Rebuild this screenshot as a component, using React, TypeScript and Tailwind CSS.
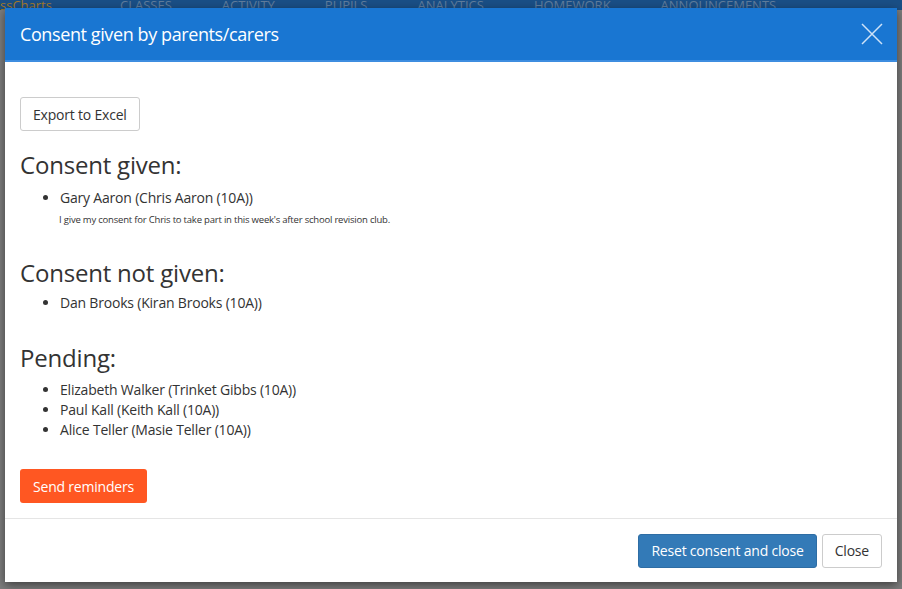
export default function App() {
  const f = { fontFamily: '"Open Sans", "Liberation Sans", sans-serif' };
  return (
    <div style={f} className="relative w-[902px] h-[589px] overflow-hidden bg-[#7d7d7d] text-[#333]">
      <div className="absolute left-0 top-0 w-full h-[10px] bg-[#1a4f86] flex gap-[50px] pl-[65px] text-[13px] text-[#5f7c9c] leading-[10px] items-end">
        <span className="text-[#a37a2b] -ml-[65px] w-[70px]">ssCharts</span>
        <span>CLASSES</span><span>ACTIVITY</span><span>PUPILS</span><span>ANALYTICS</span><span>HOMEWORK</span><span>ANNOUNCEMENTS</span>
      </div>
      <div className="absolute left-[5px] top-[8px] w-[892px] h-[574px] bg-white flex flex-col shadow-[0_3px_9px_rgba(0,0,0,0.5)]">
        <div className="h-[54px] bg-[#1976d2] flex items-center justify-between pl-[15px] pr-[14px] border-b-2 border-[#3d8de0]">
          <span className="text-white text-[18px] tracking-[-0.4px]">Consent given by parents/carers</span>
          <svg width="22" height="22" viewBox="0 0 22 22" stroke="#cfe2f7" strokeWidth="1.5"><path d="M1 1L21 21M21 1L1 21" /></svg>
        </div>
        <div className="flex-1 px-[15px] pt-[35px] tracking-[-0.2px]">
          <button className="h-[34px] px-[12px] border border-[#ccc] rounded-[3px] text-[14px] text-[#333]">Export to Excel</button>
          <h2 className="text-[24px] mt-[18px] leading-[32px]">Consent given:</h2>
          <ul className="list-disc pl-[40px] text-[14px] leading-[20px] mt-[7px]">
            <li>Gary Aaron (Chris Aaron (10A))<div className="text-[9.5px] leading-[16px] -ml-[1px] mt-[4px]">I give my consent for Chris to take part in this week's after school revision club.</div></li>
          </ul>
          <h2 className="text-[24px] mt-[29px] leading-[32px]">Consent not given:</h2>
          <ul className="list-disc pl-[40px] text-[14px] leading-[20px] mt-[4px]"><li>Dan Brooks (Kiran Brooks (10A))</li></ul>
          <h2 className="text-[24px] mt-[29px] leading-[32px]">Pending:</h2>
          <ul className="list-disc pl-[40px] text-[14px] leading-[20px] mt-[6px]">
            <li>Elizabeth Walker (Trinket Gibbs (10A))</li>
            <li>Paul Kall (Keith Kall (10A))</li>
            <li>Alice Teller (Masie Teller (10A))</li>
          </ul>
          <button className="mt-[29px] h-[34px] px-[13px] bg-[#ff5722] rounded-[3px] text-white text-[14px]">Send reminders</button>
        </div>
        <div className="h-[64px] border-t border-[#e5e5e5] flex items-center justify-end gap-[5px] pr-[15px] tracking-[-0.2px]">
          <button className="h-[34px] px-[12px] bg-[#337ab7] border border-[#2e6da4] rounded-[3px] text-white text-[14px]">Reset consent and close</button>
          <button className="h-[34px] px-[12px] border border-[#ccc] rounded-[3px] text-[14px] text-[#333]">Close</button>
        </div>
      </div>
    </div>
  );
}
